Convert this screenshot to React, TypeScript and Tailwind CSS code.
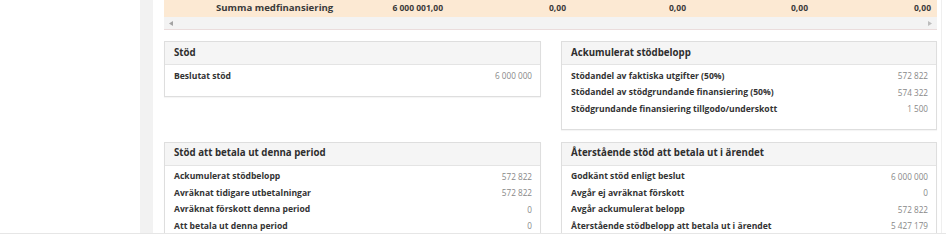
const font = { fontFamily: '"Open Sans", "Noto Sans", sans-serif' };

type Row = [string, string];

function Card({ title, rows }: { title: string; rows: Row[] }) {
  return (
    <section className="border border-[#dedede] bg-white shadow-[0_1px_1px_rgba(0,0,0,0.04)]">
      <div className="flex h-[23px] items-center border-b border-[#e4e4e4] bg-[#f5f5f5] pl-[9px] text-[9.7px] font-bold text-[#2e2e2e]">
        {title}
      </div>
      <div className="pt-[3px] pb-[11px] pl-[9px] pr-[8px]">
        {rows.map(([label, value]) => (
          <div key={label} className="flex h-[16.5px] items-center justify-between">
            <span className="text-[8.6px] font-bold text-[#333]">{label}</span>
            <span className="text-[8.2px] text-[#888]">{value}</span>
          </div>
        ))}
      </div>
    </section>
  );
}

export default function App() {
  const values = [
    ["6 000 001,00", "w-[110px]"],
    ["0,00", "w-[123px]"],
    ["0,00", "w-[120px]"],
    ["0,00", "w-[122px]"],
    ["0,00", "w-[123px]"],
  ];

  return (
    <div className="h-[250px] w-[946px] overflow-hidden bg-white" style={font}>
      <div className="flex h-[234px] overflow-hidden border-b border-[#e6e6e6]">
        <aside className="w-[140px] bg-white" />
        <div className="w-[13px] bg-[#f2f2f2]" />
        <main className="w-[788px] overflow-hidden bg-white pl-[11px] pr-[4px]">
          <div className="border-b border-[#eadcdc]">
            <div className="flex h-[17px] items-center bg-[#fce9d3] font-bold text-[#3a3a3a]">
              <div className="w-[52px]" />
              <div className="w-[117px] whitespace-nowrap text-[9.6px]">Summa medfinansiering</div>
              {values.map(([v, w], i) => (
                <div key={i} className={`${w} text-right text-[8.5px]`}>
                  {v}
                </div>
              ))}
            </div>
            <div className="flex h-[12px] items-center justify-between bg-[#f3f3f3] px-[5px]">
              <svg width="4" height="5" viewBox="0 0 4 5">
                <path d="M4 0 L0 2.5 L4 5 Z" fill="#a3a3a3" />
              </svg>
              <svg width="4" height="5" viewBox="0 0 4 5">
                <path d="M0 0 L4 2.5 L0 5 Z" fill="#bdbdbd" />
              </svg>
            </div>
          </div>

          <div className="mt-[11px] grid grid-cols-[377px_376px] items-start gap-x-[20px] gap-y-[12px]">
            <Card title="Stöd" rows={[["Beslutat stöd", "6 000 000"]]} />
            <Card
              title="Ackumulerat stödbelopp"
              rows={[
                ["Stödandel av faktiska utgifter (50%)", "572 822"],
                ["Stödandel av stödgrundande finansiering (50%)", "574 322"],
                ["Stödgrundande finansiering tillgodo/underskott", "1 500"],
              ]}
            />
            <Card
              title="Stöd att betala ut denna period"
              rows={[
                ["Ackumulerat stödbelopp", "572 822"],
                ["Avräknat tidigare utbetalningar", "572 822"],
                ["Avräknat förskott denna period", "0"],
                ["Att betala ut denna period", "0"],
              ]}
            />
            <Card
              title="Återstående stöd att betala ut i ärendet"
              rows={[
                ["Godkänt stöd enligt beslut", "6 000 000"],
                ["Avgår ej avräknat förskott", "0"],
                ["Avgår ackumulerat belopp", "572 822"],
                ["Återstående stödbelopp att betala ut i ärendet", "5 427 179"],
              ]}
            />
          </div>
        </main>
        <div className="flex-1 border-l border-[#efefef] bg-white" />
      </div>
    </div>
  );
}
